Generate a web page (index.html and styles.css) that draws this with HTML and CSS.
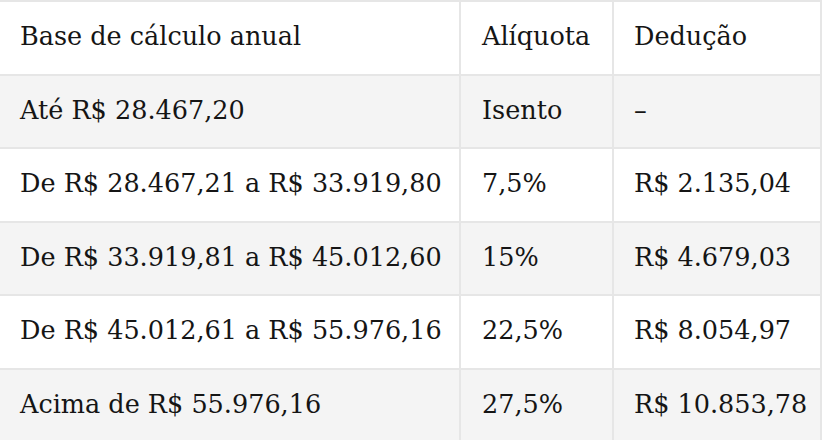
FILE: index.html
```html
<!DOCTYPE html>
<html lang="pt">
<head>
<meta charset="utf-8">
<link rel="stylesheet" href="styles.css">
</head>
<body>
<table class="ir">
  <thead>
    <tr><th>Base de cálculo anual</th><th>Alíquota</th><th>Dedução</th></tr>
  </thead>
  <tbody>
    <tr><td>Até R$ 28.467,20</td><td>Isento</td><td>–</td></tr>
    <tr><td>De R$ 28.467,21 a R$ 33.919,80</td><td>7,5%</td><td>R$ 2.135,04</td></tr>
    <tr><td>De R$ 33.919,81 a R$ 45.012,60</td><td>15%</td><td>R$ 4.679,03</td></tr>
    <tr><td>De R$ 45.012,61 a R$ 55.976,16</td><td>22,5%</td><td>R$ 8.054,97</td></tr>
    <tr><td>Acima de R$ 55.976,16</td><td>27,5%</td><td>R$ 10.853,78</td></tr>
  </tbody>
</table>
</body>
</html>
```
FILE: styles.css
```css
html, body {
  margin: 0;
  padding: 0;
  background: #ffffff;
}
.ir {
  border-collapse: collapse;
  width: 822px;
  table-layout: fixed;
  font-family: "DejaVu Serif", "Liberation Serif", serif;
  font-size: 25.5px;
  color: #151515;
}
.ir th, .ir td {
  border: 2px solid #e6e6e6;
  height: 73.5px;
  padding: 0 0 3px 20px;
  text-align: left;
  font-weight: normal;
  vertical-align: middle;
  white-space: nowrap;
  box-sizing: border-box;
}
.ir th:first-child, .ir td:first-child {
  border-left: none;
  width: 460px;
}
.ir th:nth-child(2), .ir td:nth-child(2) {
  width: 153px;
  padding-left: 21px;
}
.ir thead th {
  background: #ffffff;
}
.ir tbody tr:nth-child(odd) td {
  background: #f4f4f4;
}
.ir tbody tr:nth-child(even) td {
  background: #ffffff;
}
```
